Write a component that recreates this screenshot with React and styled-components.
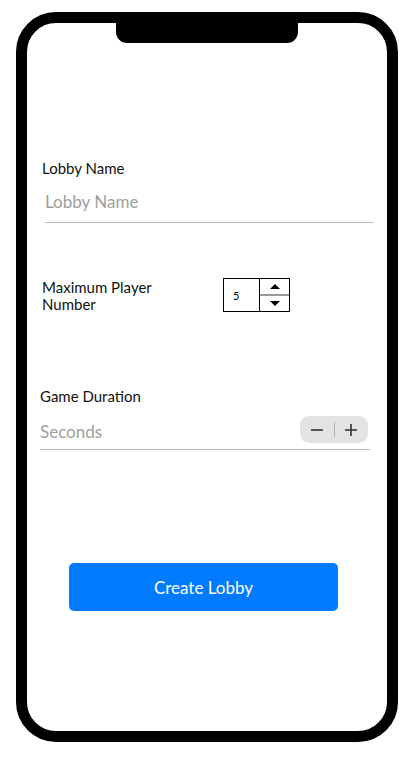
import React from "react";
import styled, { createGlobalStyle } from "styled-components";

const GlobalStyle = createGlobalStyle`
  html, body { margin: 0; padding: 0; background: #fff; }
  body { font-family: "Lato", "Noto Sans", sans-serif; color: #000; }
  * { box-sizing: border-box; }
`;

const Screen = styled.div`
  width: 418px;
  height: 757px;
  padding: 12px 20px 15px 16px;
`;

const Phone = styled.div`
  width: 382px;
  height: 730px;
  border: 11px solid #000;
  border-radius: 40px;
  display: flex;
  flex-direction: column;
  background: #fff;
`;

const Notch = styled.div`
  align-self: center;
  width: 182px;
  height: 20px;
  background: #000;
  border-radius: 0 0 11px 11px;
  flex-shrink: 0;
`;

const Section = styled.div`
  display: flex;
  flex-direction: column;
  gap: ${(p) => p.$gap || 10}px;
  margin-top: ${(p) => p.$top}px;
`;

const Label = styled.label`
  font-size: 15px;
  line-height: 20px;
  margin-left: ${(p) => p.$left}px;
  color: #111;
`;

const TextInput = styled.input`
  display: block;
  border: none;
  border-bottom: 1px solid #bdbdbd;
  outline: none;
  font-family: inherit;
  font-size: 17px;
  height: 35px;
  padding: 0 0 7px 0;
  margin: 0 ${(p) => p.$right}px 0 ${(p) => p.$left}px;
  background: transparent;
  &::placeholder { color: #9e9e9e; }
`;

const PlayerRow = styled.div`
  display: flex;
  align-items: center;
  margin-top: ${(p) => p.$top}px;
  margin-left: 15px;
`;

const MultiLabel = styled.label`
  font-size: 15px;
  line-height: 17px;
  width: 140px;
  margin-top: 2px;
  color: #111;
`;

const NumberBox = styled.div`
  display: flex;
  margin-left: 41px;
  width: 67px;
  height: 34px;
  border: 1px solid #000;
`;

const NumberValue = styled.div`
  width: 36px;
  font-size: 11px;
  display: flex;
  align-items: center;
  padding-left: 9px;
  border-right: 1px solid #000;
  padding-top: 1px;
`;

const Spin = styled.div`
  flex: 1;
  display: flex;
  flex-direction: column;
`;

const SpinButton = styled.button`
  flex: 1;
  border: none;
  background: #fff;
  padding: 0;
  display: flex;
  align-items: center;
  justify-content: center;
  border-top: ${(p) => (p.$down ? "2px solid #9a9a9a" : "none")};
`;

const Tri = styled.span`
  width: 0;
  height: 0;
  border-left: 5px solid transparent;
  border-right: 5px solid transparent;
  ${(p) =>
    p.$down
      ? "border-top: 5px solid #000;"
      : "border-bottom: 5px solid #000;"}
`;

const DurationRow = styled.div`
  display: flex;
  align-items: flex-start;
  justify-content: space-between;
  border-bottom: 1px solid #bdbdbd;
  height: 34px;
  margin: 0 17px 0 13px;
`;

const BareInput = styled.input`
  border: none;
  outline: none;
  font-family: inherit;
  font-size: 17px;
  padding: 0;
  height: 27px;
  width: 150px;
  margin-top: 2px;
  background: transparent;
  &::placeholder { color: #9e9e9e; }
`;

const Stepper = styled.div`
  display: flex;
  align-items: center;
  width: 68px;
  height: 27px;
  border-radius: 9px;
  background: #e3e3e3;
  margin-right: 2px;
`;

const StepButton = styled.button`
  flex: 1;
  height: 100%;
  border: none;
  background: transparent;
  padding: 0;
  display: flex;
  align-items: center;
  justify-content: center;
`;

const StepDivider = styled.span`
  width: 1px;
  height: 15px;
  background: #b5b5b5;
`;

const PrimaryButton = styled.button`
  margin: ${(p) => p.$top}px 0 0 42px;
  width: 269px;
  height: 48px;
  border: none;
  border-radius: 5px;
  background: #007bff;
  color: #fff;
  font-family: inherit;
  font-size: 17px;
`;

export default function App() {
  return (
    <>
      <GlobalStyle />
      <Screen>
        <Phone>
          <Notch />
          <Section $top={115}>
            <Label $left={15}>Lobby Name</Label>
            <TextInput placeholder="Lobby Name" $left={18} $right={13} />
          </Section>
          <PlayerRow $top={54}>
            <MultiLabel>Maximum Player Number</MultiLabel>
            <NumberBox>
              <NumberValue>5</NumberValue>
              <Spin>
                <SpinButton aria-label="increase">
                  <Tri />
                </SpinButton>
                <SpinButton $down aria-label="decrease">
                  <Tri $down />
                </SpinButton>
              </Spin>
            </NumberBox>
          </PlayerRow>
          <Section $top={73}>
            <Label $left={13}>Game Duration</Label>
            <DurationRow>
              <BareInput placeholder="Seconds" />
              <Stepper>
                <StepButton aria-label="minus">
                  <svg width="14" height="14" viewBox="0 0 14 14">
                    <path d="M1 7h12" stroke="#333" strokeWidth="1.6" />
                  </svg>
                </StepButton>
                <StepDivider />
                <StepButton aria-label="plus">
                  <svg width="14" height="14" viewBox="0 0 14 14">
                    <path d="M1 7h12M7 1v12" stroke="#333" strokeWidth="1.6" />
                  </svg>
                </StepButton>
              </Stepper>
            </DurationRow>
          </Section>
          <PrimaryButton $top={113}>Create Lobby</PrimaryButton>
        </Phone>
      </Screen>
    </>
  );
}
